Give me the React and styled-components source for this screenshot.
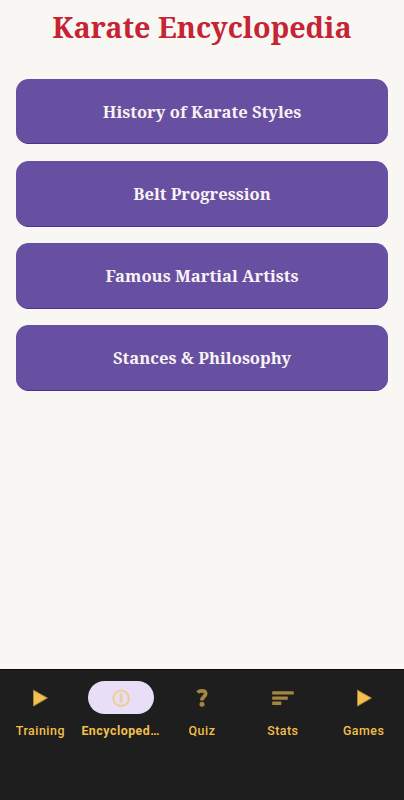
import React, { useState } from 'react';
import styled, { createGlobalStyle, ThemeProvider } from 'styled-components';

const theme = {
  fonts: {
    heading: '"Noto Serif", "Liberation Serif", serif',
    label: 'Roboto, "Liberation Sans", sans-serif',
  },
  colors: {
    page: '#f8f7f3',
    title: '#c62334',
    button: '#674fa1',
    buttonText: '#f8f3f4',
    nav: '#1e1e1e',
    gold: '#f3be4b',
    pill: '#e8def8',
  },
};

const topics = [
  'History of Karate Styles',
  'Belt Progression',
  'Famous Martial Artists',
  'Stances & Philosophy',
];

const PlayIcon = () => (
  <svg width="24" height="24" viewBox="0 0 24 24">
    <path d="M5.5 4.2L19.4 12L5.5 20Z" fill="#f6c04d" stroke="#a58541" strokeWidth="1" />
  </svg>
);

const InfoIcon = () => (
  <svg width="24" height="24" viewBox="0 0 24 24" fill="none" stroke="#efcd9b">
    <circle cx="12.1" cy="12.2" r="7.7" strokeWidth="2.1" />
    <path d="M12.1 7.4V16.8" strokeWidth="3" />
  </svg>
);

const QuestionIcon = () => (
  <svg width="24" height="24" viewBox="0 0 24 24" fill="none" stroke="#a58541">
    <path
      d="M7.6 6.6C8.8 5.3 10.3 4.8 12 4.8C14.4 4.8 15.7 6 15.7 7.7C15.7 10.8 11.9 10.2 11.9 14.6"
      strokeWidth="3.7"
    />
    <circle cx="12" cy="18.3" r="2.5" fill="#a58541" stroke="none" />
  </svg>
);

const BarsIcon = () => (
  <svg width="24" height="24" viewBox="0 0 24 24" fill="#a58541">
    <rect x="1.2" y="5.2" width="21.6" height="3.4" rx="0.5" />
    <rect x="1.2" y="10.4" width="15.6" height="3.4" rx="0.5" />
    <rect x="1.2" y="15.6" width="9.1" height="3.4" rx="0.5" />
  </svg>
);

const tabs = [
  { name: 'Training', Icon: PlayIcon },
  { name: 'Encyclopedia', Icon: InfoIcon },
  { name: 'Quiz', Icon: QuestionIcon },
  { name: 'Stats', Icon: BarsIcon },
  { name: 'Games', Icon: PlayIcon },
];

const App = () => {
  const [activeTab, setActiveTab] = useState('Encyclopedia');

  const topicsList = topics.map((topic) => (
    <TopicButton key={topic}>{topic}</TopicButton>
  ));

  const tabsList = tabs.map(({ name, Icon }) => (
    <Tab key={name} onClick={() => setActiveTab(name)}>
      <Indicator $active={name === activeTab}>
        <Icon />
      </Indicator>
      <TabLabel $active={name === activeTab}>{name}</TabLabel>
    </Tab>
  ));

  return (
    <ThemeProvider theme={theme}>
      <GlobalStyle />
      <Screen>
        <Title>Karate Encyclopedia</Title>
        <TopicList>{topicsList}</TopicList>
        <BottomNav>{tabsList}</BottomNav>
      </Screen>
    </ThemeProvider>
  );
}


const GlobalStyle = createGlobalStyle`
  * {
    box-sizing: border-box;
  }

  body {
    margin: 0;
  }
`

const Screen = styled.div`
  height: 100vh;

  display: flex;
  flex-direction: column;

  background-color: ${props => props.theme.colors.page};
`

const Title = styled.h1`
  margin: 0;
  padding-top: 7px;

  font-family: ${props => props.theme.fonts.heading};
  font-size: 28.75px;
  font-weight: 700;
  line-height: 40px;
  text-align: center;

  color: ${props => props.theme.colors.title};
`

const TopicList = styled.main`
  flex: 1;

  display: flex;
  flex-direction: column;
  gap: 16.4px;

  padding: 31.6px 16.4px 0;
`

const TopicButton = styled.button`
  height: 65.8px;

  padding: 0.3px 0 0;

  border: none;
  border-bottom: 1px solid #4f2f90;
  border-radius: 12.5px;

  background-color: ${props => props.theme.colors.button};
  color: ${props => props.theme.colors.buttonText};

  font-family: ${props => props.theme.fonts.heading};
  font-size: 16.6px;
  font-weight: 700;
`

const BottomNav = styled.nav`
  height: 131px;

  display: grid;
  grid-template-columns: repeat(5, minmax(0, 1fr));

  padding-top: 11px;

  border-top: 1px solid #0c0c0c;

  background-color: ${props => props.theme.colors.nav};
`

const Tab = styled.button`
  min-width: 0;

  display: flex;
  flex-direction: column;
  align-items: center;
  justify-content: flex-start;

  margin: 0;
  padding: 0;

  border: none;
  background: none;
`

const Indicator = styled.span`
  width: 66.4px;
  height: 33px;

  flex-shrink: 0;

  display: flex;
  align-items: center;
  justify-content: center;

  border-radius: 17px;

  background-color: ${props => props.$active ? props.theme.colors.pill : 'transparent'};
`

const TabLabel = styled.span`
  max-width: 79.6px;

  margin-top: 8px;

  overflow: hidden;
  text-overflow: ellipsis;
  white-space: nowrap;

  font-family: ${props => props.theme.fonts.label};
  font-size: 12.4px;
  font-weight: ${props => props.$active ? 700 : 500};
  line-height: 17px;
  letter-spacing: 0.5px;

  color: ${props => props.theme.colors.gold};
`


export default App;
